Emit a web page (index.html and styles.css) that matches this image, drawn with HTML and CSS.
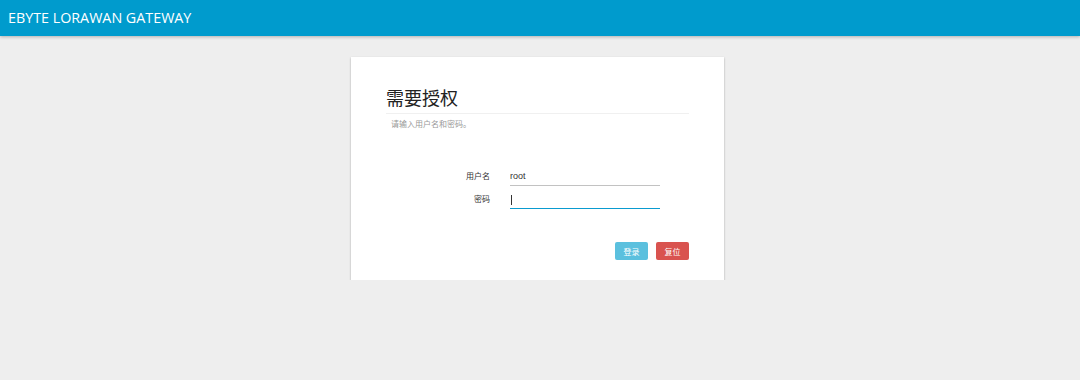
FILE: index.html
```html
<!DOCTYPE html>
<html>
<head>
    <meta charset="utf-8">
    <title>EBYTE LORAWAN GATEWAY</title>
    <link rel="stylesheet" href="styles.css">
</head>
<body>
<header class="topbar">
    <span class="brand">EBYTE LORAWAN GATEWAY</span>
</header>
<div class="main">
    <div class="card">
        <h2>需要授权</h2>
        <p class="hint">请输入用户名和密码。</p>
        <div class="fields">
            <div class="row">
                <label>用户名</label>
                <div class="field-wrap">
                    <input type="text" class="field" value="root">
                </div>
            </div>
            <div class="row">
                <label>密码</label>
                <div class="field-wrap caret">
                    <input type="password" class="field active">
                </div>
            </div>
        </div>
        <div class="actions">
            <button class="btn btn-login">登录</button>
            <button class="btn btn-reset">复位</button>
        </div>
    </div>
</div>
</body>
</html>
```

FILE: styles.css
```css
body {
    margin: 0;
    background-color: #eeeeee;
    font-family: "Open Sans", "Noto Sans CJK SC", sans-serif;
}

.topbar {
    height: 36px;
    background-color: #009bcd;
    box-shadow: 0 1px 3px rgba(0, 0, 0, 0.25);
    display: flex;
    align-items: center;
    padding-left: 8px;
}

.brand {
    color: #fff;
    font-size: 14.3px;
    margin-top: -2px;
}

.main {
    display: flex;
    justify-content: center;
    padding-top: 21px;
}

.card {
    width: 373px;
    height: 223px;
    box-sizing: border-box;
    background-color: #fff;
    box-shadow: 0 1px 2px rgba(0, 0, 0, 0.3);
    padding: 26px 35px 0 35px;
    margin-left: -5px;
}

.card h2 {
    font-family: "Noto Sans CJK SC", sans-serif;
    font-weight: 400;
    font-size: 18px;
    line-height: 28px;
    color: #222;
    margin: 0;
    padding-bottom: 2px;
    border-bottom: 1px solid #f0f0f0;
}

.hint {
    font-family: "Noto Sans CJK SC", sans-serif;
    font-size: 8px;
    color: #999;
    margin: 4px 0 0 5px;
}

.fields {
    margin-top: 38px;
    display: flex;
    flex-direction: column;
    gap: 4px;
}

.row {
    display: flex;
    align-items: flex-end;
}

.row label {
    width: 104px;
    text-align: right;
    font-family: "Noto Sans CJK SC", sans-serif;
    font-size: 8px;
    color: #333;
    padding-bottom: 5px;
}

.field-wrap {
    position: relative;
    margin-left: 20px;
}

.field {
    display: block;
    width: 150px;
    height: 19px;
    box-sizing: border-box;
    border: none;
    border-bottom: 1px solid #c2c2c2;
    font-family: "Liberation Sans", sans-serif;
    font-size: 9px;
    color: #333;
    padding: 0;
    outline: none;
    background: #fff;
}

.field.active {
    border-bottom: 1.5px solid #0a9bd0;
}

.caret::after {
    content: "";
    position: absolute;
    left: 1px;
    top: 5px;
    width: 1px;
    height: 10px;
    background-color: #333;
}

.actions {
    margin-top: 33px;
    display: flex;
    justify-content: flex-end;
    gap: 8px;
}

.btn {
    width: 33px;
    height: 18px;
    border: none;
    border-radius: 2px;
    color: #fff;
    font-family: "Noto Sans CJK SC", sans-serif;
    font-size: 8px;
    padding: 0;
    cursor: pointer;
}

.btn-login {
    background-color: #5bc0de;
}

.btn-reset {
    background-color: #d9534f;
}
```
